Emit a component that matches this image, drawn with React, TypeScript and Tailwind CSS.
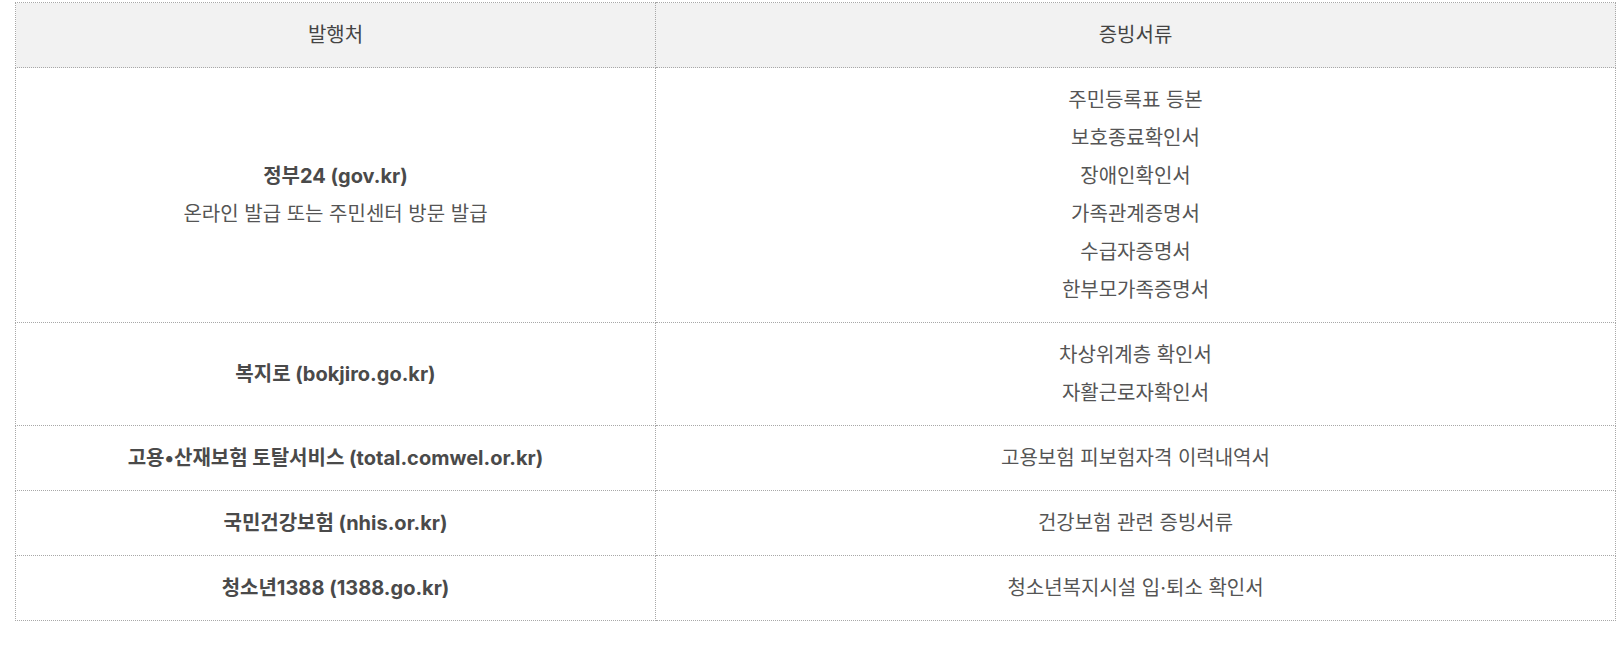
const rows: { issuer: string; note?: string; docs: string[] }[] = [
  {
    issuer: "정부24 (gov.kr)",
    note: "온라인 발급 또는 주민센터 방문 발급",
    docs: ["주민등록표 등본", "보호종료확인서", "장애인확인서", "가족관계증명서", "수급자증명서", "한부모가족증명서"],
  },
  { issuer: "복지로 (bokjiro.go.kr)", docs: ["차상위계층 확인서", "자활근로자확인서"] },
  { issuer: "고용•산재보험 토탈서비스 (total.comwel.or.kr)", docs: ["고용보험 피보험자격 이력내역서"] },
  { issuer: "국민건강보험 (nhis.or.kr)", docs: ["건강보험 관련 증빙서류"] },
  { issuer: "청소년1388 (1388.go.kr)", docs: ["청소년복지시설 입·퇴소 확인서"] },
];

const cell = "border border-dotted border-[#a8a8a8] px-4 py-[13px] text-center align-middle";

export default function App() {
  return (
    <div
      className="bg-white pt-[2px] pl-[15px] text-[20px] leading-[38px] text-[#555]"
      style={{ fontFamily: '"Inter", "Noto Sans CJK KR", sans-serif' }}
    >
      <table className="w-[1601px] border-collapse table-fixed">
        <colgroup>
          <col className="w-[640px]" />
          <col />
        </colgroup>
        <thead>
          <tr className="bg-[#f2f2f2]">
            <th className={`${cell} font-normal text-[#444]`}>발행처</th>
            <th className={`${cell} font-normal text-[#444]`}>증빙서류</th>
          </tr>
        </thead>
        <tbody>
          {rows.map((r) => (
            <tr key={r.issuer}>
              <td className={cell}>
                <div className="font-bold text-[#4a4a4a]">{r.issuer}</div>
                {r.note && <div>{r.note}</div>}
              </td>
              <td className={cell}>
                {r.docs.map((d) => (
                  <div key={d}>{d}</div>
                ))}
              </td>
            </tr>
          ))}
        </tbody>
      </table>
    </div>
  );
}
